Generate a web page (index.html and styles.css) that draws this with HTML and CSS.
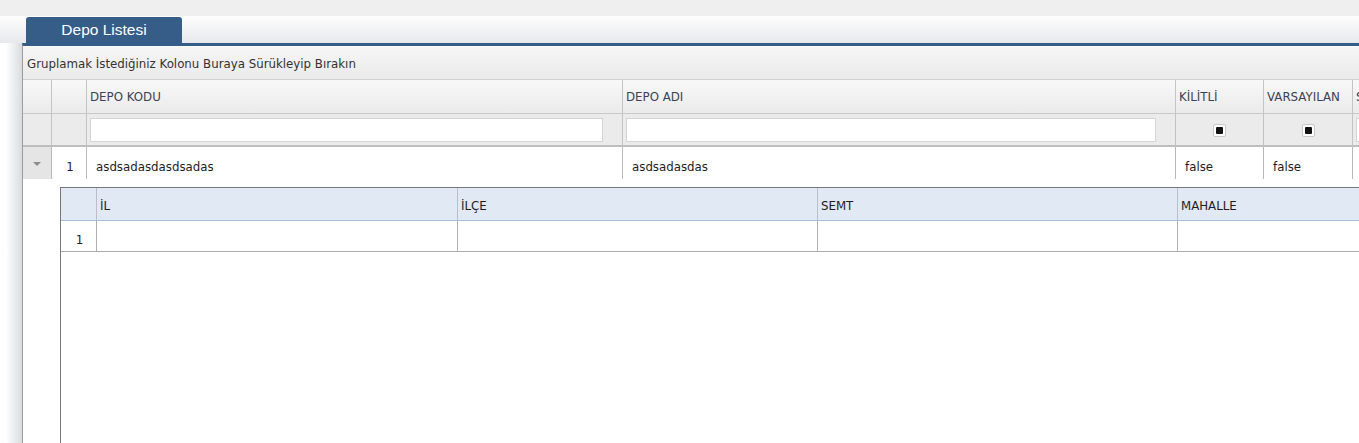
FILE: index.html
```html
<!DOCTYPE html>
<html>
<head>
    <title>Depo Listesi</title>
    <meta charset="utf-8">
    <link rel="stylesheet" href="styles.css">
</head>
<body>
    <div class="topbar"></div>
    <div class="tabstrip">
        <div class="tab">Depo Listesi</div>
    </div>
    <div class="desk">
        <div class="window">
            <div class="group-panel">Gruplamak İstediğiniz Kolonu Buraya Sürükleyip Bırakın</div>
            <table class="grid">
                <colgroup>
                    <col style="width: 29px">
                    <col style="width: 35px">
                    <col style="width: 536px">
                    <col style="width: 553px">
                    <col style="width: 88px">
                    <col style="width: 89px">
                    <col style="width: 120px">
                </colgroup>
                <thead>
                    <tr class="head-row">
                        <th></th>
                        <th></th>
                        <th>DEPO KODU</th>
                        <th>DEPO ADI</th>
                        <th>KİLİTLİ</th>
                        <th>VARSAYILAN</th>
                        <th>SİLİNDİ</th>
                    </tr>
                    <tr class="filter-row">
                        <td></td>
                        <td></td>
                        <td><input class="filter-input" type="text"></td>
                        <td><input class="filter-input" type="text"></td>
                        <td class="check-cell"><span class="check"></span></td>
                        <td class="check-cell"><span class="check"></span></td>
                        <td><input class="filter-input" type="text"></td>
                    </tr>
                </thead>
                <tbody>
                    <tr class="data-row">
                        <td class="expander"><span class="arrow"></span></td>
                        <td class="row-no">1</td>
                        <td>asdsadasdasdsadas</td>
                        <td>asdsadasdas</td>
                        <td>false</td>
                        <td>false</td>
                        <td></td>
                    </tr>
                    <tr class="detail-row">
                        <td colspan="7" class="detail-cell">
                            <div class="detail-box">
                                <table class="sub-grid">
                                    <colgroup>
                                        <col style="width: 36px">
                                        <col style="width: 361px">
                                        <col style="width: 360px">
                                        <col style="width: 360px">
                                        <col style="width: 320px">
                                    </colgroup>
                                    <thead>
                                        <tr>
                                            <th></th>
                                            <th>İL</th>
                                            <th>İLÇE</th>
                                            <th>SEMT</th>
                                            <th>MAHALLE</th>
                                        </tr>
                                    </thead>
                                    <tbody>
                                        <tr>
                                            <td class="row-no">1</td>
                                            <td></td>
                                            <td></td>
                                            <td></td>
                                            <td></td>
                                        </tr>
                                    </tbody>
                                </table>
                            </div>
                        </td>
                    </tr>
                </tbody>
            </table>
        </div>
    </div>
</body>
</html>
```

FILE: styles.css
```css
body {
    margin: 0;
    font-family: "DejaVu Sans", Verdana, sans-serif;
    font-size: 11.8px;
    color: #222;
    background: #fff;
    overflow: hidden;
}
.topbar {
    height: 16px;
    background: #efefef;
}
.tabstrip {
    height: 27px;
    padding-left: 26px;
    display: flex;
    align-items: flex-end;
    background: linear-gradient(#fdfdfd, #e7e9ec);
}
.tab {
    width: 156px;
    height: 26px;
    line-height: 26px;
    background: #365d87;
    border-radius: 3px 3px 0 0;
    color: #fff;
    font-family: "Liberation Sans", Arial, sans-serif;
    font-size: 15.5px;
    text-align: center;
}
.desk {
    height: calc(100vh - 43px);
    padding-left: 22px;
    background: linear-gradient(to right, #fff 0, #fff 6px, #dadbde 22px) no-repeat;
    background-size: 22px 100%;
}
.window {
    height: 100%;
    border-top: 3px solid #365d87;
    border-left: 1px solid #9c9c9c;
    background: #fff;
    overflow: hidden;
    box-sizing: border-box;
}
.group-panel {
    margin-top: 1px;
    height: 32px;
    line-height: 34px;
    padding-left: 4px;
    background: linear-gradient(#f6f6f6, #eaeaea);
    border-bottom: 1px solid #d0d0d0;
    color: #333;
    white-space: nowrap;
}

/* main grid */
.grid {
    border-collapse: separate;
    border-spacing: 0;
    table-layout: fixed;
    width: 1450px;
}
.grid th, .grid td {
    box-sizing: border-box;
    padding: 0;
    white-space: nowrap;
    overflow: hidden;
}
.head-row th {
    height: 34px;
    padding-left: 3px;
    text-align: left;
    font-weight: normal;
    color: #3b4350;
    background: linear-gradient(#f8f8f8, #ebebeb);
    border-right: 1px solid #c4c4c4;
    border-bottom: 1px solid #c8c8c8;
}
.filter-row td {
    height: 33px;
    padding: 0 19px 0 3px;
    background: #ebebeb;
    border-right: 1px solid #c4c4c4;
    border-bottom: 2px solid #bdbdbd;
}
.filter-input {
    display: block;
    width: 100%;
    height: 24px;
    margin: 0;
    border: 1px solid #d4d4d4;
    background: #fff;
    box-sizing: border-box;
}
.filter-row .check-cell {
    padding: 0;
    text-align: center;
    vertical-align: middle;
}
.check {
    display: inline-flex;
    align-items: center;
    justify-content: center;
    width: 13px;
    height: 13px;
    border: 1px solid #c8c8c8;
    border-radius: 2px;
    background: #fff;
    box-sizing: border-box;
    vertical-align: middle;
}
.check::before {
    content: "";
    width: 7px;
    height: 7px;
    background: #111;
    border-radius: 1px;
}
.data-row td {
    height: 32px;
    padding: 8px 0 0 9px;
    border-right: 1px solid #b8b8b8;
    color: #1e1e1e;
}
.data-row .expander {
    padding: 0;
    background: #e5e5e5;
    text-align: center;
    vertical-align: middle;
}
.arrow {
    display: inline-block;
    width: 0;
    height: 0;
    border-left: 4px solid transparent;
    border-right: 4px solid transparent;
    border-top: 4px solid #8c8c8c;
    vertical-align: middle;
}
.grid .row-no {
    padding-left: 2px;
    text-align: center;
}

/* detail grid inside the expanded row */
.detail-row .detail-cell {
    padding: 8px 0 0 37px;
    vertical-align: top;
}
.detail-box {
    height: 280px;
    border-top: 1px solid #777;
    border-left: 1px solid #777;
}
.sub-grid {
    border-collapse: separate;
    border-spacing: 0;
    table-layout: fixed;
    width: 1437px;
}
.sub-grid th, .sub-grid td {
    box-sizing: border-box;
    padding: 0;
}
.sub-grid th {
    height: 33px;
    padding: 3px 0 0 3px;
    text-align: left;
    font-weight: normal;
    color: #1e1e1e;
    background: #e1e9f5;
    border-right: 1px solid #b9c0c8;
    border-bottom: 1px solid #a3bfda;
}
.sub-grid td {
    height: 31px;
    padding-top: 7px;
    border-right: 1px solid #b0b0b0;
    border-bottom: 1px solid #ababab;
}
.sub-grid .row-no {
    padding-left: 2px;
    text-align: center;
}
```
